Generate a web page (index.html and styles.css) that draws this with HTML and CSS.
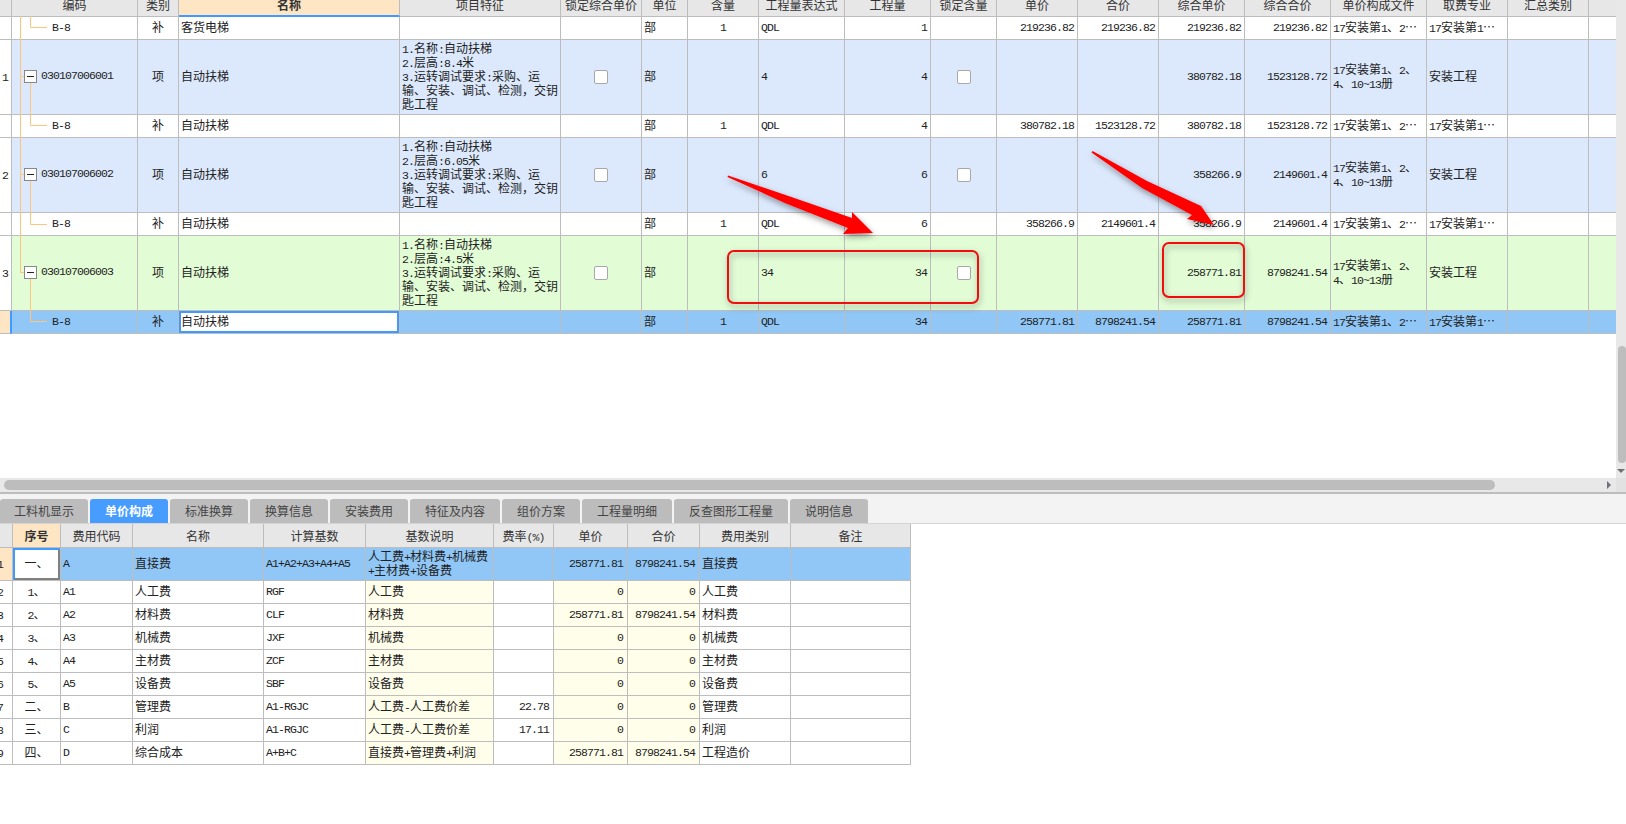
FILE: index.html
```html
<!DOCTYPE html>
<html lang="zh-CN">
<head>
  <meta charset="UTF-8">
  <title>单价构成</title>
  <link rel="stylesheet" href="styles.css">
</head>
<body>
  <div class="top">
    <div class="grid-wrap">
      <table class="grid grid-main">
        <colgroup>
          <col class="w12"><col class="w126"><col class="w41"><col class="w221"><col class="w161"><col class="w81"><col class="w46"><col class="w71"><col class="w86"><col class="w86"><col class="w66"><col class="w81"><col class="w81"><col class="w86"><col class="w86"><col class="w96"><col class="w81"><col class="w81"><col class="w27">
        </colgroup>
        <tr class="head">
          <th></th><th>编码</th><th>类别</th><th class="head-on">名称</th><th>项目特征</th><th>锁定综合单价</th><th>单位</th><th>含量</th><th>工程量表达式</th><th>工程量</th><th>锁定含量</th><th>单价</th><th>合价</th><th>综合单价</th><th>综合合价</th><th>单价构成文件</th><th>取费专业</th><th>汇总类别</th><th></th>
        </tr>
        <tr class="sub">
          <td></td><td class="sub-code m">B-8</td><td class="c">补</td><td>客货电梯</td><td></td><td></td><td>部</td><td class="c m">1</td><td class="m">QDL</td><td class="r m">1</td><td></td><td class="r m">219236.82</td><td class="r m">219236.82</td><td class="r m">219236.82</td><td class="r m">219236.82</td><td><span class="m">17</span>安装第<span class="m">1</span>、<span class="m">2</span>…</td><td><span class="m">17</span>安装第<span class="m">1</span>…</td><td></td><td></td>
        </tr>
        <tr class="tall blue">
          <td><span class="m">1</span></td><td><div class="code"><span class="minus"></span><span class="m">030107006001</span></div></td><td class="c">项</td><td>自动扶梯</td>
          <td><span class="m">1.</span>名称<span class="m">:</span>自动扶梯<br><span class="m">2.</span>层高<span class="m">:8.4</span>米<br><span class="m">3.</span>运转调试要求<span class="m">:</span>采购、运<br>输、安装、调试、检测，交钥<br>匙工程</td>
          <td class="c"><span class="check"></span></td><td>部</td><td></td><td class="m">4</td><td class="r m">4</td><td class="c"><span class="check"></span></td><td></td><td></td><td class="r m">380782.18</td><td class="r m">1523128.72</td><td><span class="m">17</span>安装第<span class="m">1</span>、<span class="m">2</span>、<br><span class="m">4</span>、<span class="m">10~13</span>册</td><td>安装工程</td><td></td><td></td>
        </tr>
        <tr class="sub">
          <td></td><td class="sub-code m">B-8</td><td class="c">补</td><td>自动扶梯</td><td></td><td></td><td>部</td><td class="c m">1</td><td class="m">QDL</td><td class="r m">4</td><td></td><td class="r m">380782.18</td><td class="r m">1523128.72</td><td class="r m">380782.18</td><td class="r m">1523128.72</td><td><span class="m">17</span>安装第<span class="m">1</span>、<span class="m">2</span>…</td><td><span class="m">17</span>安装第<span class="m">1</span>…</td><td></td><td></td>
        </tr>
        <tr class="tall blue">
          <td><span class="m">2</span></td><td><div class="code"><span class="minus"></span><span class="m">030107006002</span></div></td><td class="c">项</td><td>自动扶梯</td>
          <td><span class="m">1.</span>名称<span class="m">:</span>自动扶梯<br><span class="m">2.</span>层高<span class="m">:6.05</span>米<br><span class="m">3.</span>运转调试要求<span class="m">:</span>采购、运<br>输、安装、调试、检测，交钥<br>匙工程</td>
          <td class="c"><span class="check"></span></td><td>部</td><td></td><td class="m">6</td><td class="r m">6</td><td class="c"><span class="check"></span></td><td></td><td></td><td class="r m">358266.9</td><td class="r m">2149601.4</td><td><span class="m">17</span>安装第<span class="m">1</span>、<span class="m">2</span>、<br><span class="m">4</span>、<span class="m">10~13</span>册</td><td>安装工程</td><td></td><td></td>
        </tr>
        <tr class="sub">
          <td></td><td class="sub-code m">B-8</td><td class="c">补</td><td>自动扶梯</td><td></td><td></td><td>部</td><td class="c m">1</td><td class="m">QDL</td><td class="r m">6</td><td></td><td class="r m">358266.9</td><td class="r m">2149601.4</td><td class="r m">358266.9</td><td class="r m">2149601.4</td><td><span class="m">17</span>安装第<span class="m">1</span>、<span class="m">2</span>…</td><td><span class="m">17</span>安装第<span class="m">1</span>…</td><td></td><td></td>
        </tr>
        <tr class="tall green">
          <td><span class="m">3</span></td><td><div class="code"><span class="minus"></span><span class="m">030107006003</span></div></td><td class="c">项</td><td>自动扶梯</td>
          <td><span class="m">1.</span>名称<span class="m">:</span>自动扶梯<br><span class="m">2.</span>层高<span class="m">:4.5</span>米<br><span class="m">3.</span>运转调试要求<span class="m">:</span>采购、运<br>输、安装、调试、检测，交钥<br>匙工程</td>
          <td class="c"><span class="check"></span></td><td>部</td><td></td><td class="m">34</td><td class="r m">34</td><td class="c"><span class="check"></span></td><td></td><td></td><td class="r m">258771.81</td><td class="r m">8798241.54</td><td><span class="m">17</span>安装第<span class="m">1</span>、<span class="m">2</span>、<br><span class="m">4</span>、<span class="m">10~13</span>册</td><td>安装工程</td><td></td><td></td>
        </tr>
        <tr class="sub sel">
          <td class="row-on"></td><td class="sub-code m">B-8</td><td class="c">补</td><td class="cell-edit">自动扶梯</td><td></td><td></td><td>部</td><td class="c m">1</td><td class="m">QDL</td><td class="r m">34</td><td></td><td class="r m">258771.81</td><td class="r m">8798241.54</td><td class="r m">258771.81</td><td class="r m">8798241.54</td><td><span class="m">17</span>安装第<span class="m">1</span>、<span class="m">2</span>…</td><td><span class="m">17</span>安装第<span class="m">1</span>…</td><td></td><td></td>
        </tr>
      </table>

      <!-- tree connectors -->
      <svg class="overlay" width="1616" height="478">
        <path class="tree" d="M20.5 16V272.5M20 76.5H24M20 174.5H24M20 272.5H24M30.5 16V27.5H47M30.5 83V125.5H47M30.5 181V224.5H47M30.5 279V321.5H47"/>
      </svg>

      <!-- red marks drawn on the screenshot -->
      <svg class="overlay" width="1616" height="478">
        <defs>
          <filter id="soft" x="-20%" y="-20%" width="140%" height="150%">
            <feDropShadow dx="1" dy="3" stdDeviation="3" flood-color="#000" flood-opacity="0.4"/>
          </filter>
        </defs>
        <g filter="url(#soft)">
          <polygon class="arrow" points="728,175.5 787,195.5 852,218 852,212 873,233 843,234 848,228 786,203.5 727.5,177"/>
          <polygon class="arrow" points="1092.5,151 1147,181 1201,206 1197,200 1214,225 1187,219 1192,215 1142,188 1091.5,152.5"/>
          <rect class="mark" x="728" y="251" width="250" height="52" rx="6"/>
          <rect class="mark" x="1163" y="243" width="81" height="54" rx="6"/>
        </g>
      </svg>
    </div>
    <div class="vscroll">
      <div class="vthumb"></div>
      <div class="arrow-down"></div>
    </div>
  </div>

  <div class="hscroll">
    <div class="hthumb"></div>
    <div class="arrow-right"></div>
    <div class="corner"></div>
  </div>

  <div class="tabs">
    <div class="tab w88">工料机显示</div>
    <div class="tab tab-on w78">单价构成</div>
    <div class="tab w78">标准换算</div>
    <div class="tab w78">换算信息</div>
    <div class="tab w78">安装费用</div>
    <div class="tab w90">特征及内容</div>
    <div class="tab w78">组价方案</div>
    <div class="tab w90">工程量明细</div>
    <div class="tab w114">反查图形工程量</div>
    <div class="tab w78">说明信息</div>
  </div>

  <table class="grid grid-cost">
    <colgroup>
      <col class="w13"><col class="w48"><col class="w72"><col class="w131"><col class="w102"><col class="w128"><col class="w60"><col class="w74"><col class="w72"><col class="w91"><col class="w120">
    </colgroup>
    <tr class="head">
      <th></th><th class="head-seq">序号</th><th>费用代码</th><th>名称</th><th>计算基数</th><th>基数说明</th><th>费率<span class="m">(%)</span></th><th>单价</th><th>合价</th><th>费用类别</th><th>备注</th>
    </tr>
    <tr class="first sel">
      <td class="row-on"><span class="cut m">1</span></td><td class="c cell-cur">一、</td><td class="m">A</td><td>直接费</td><td class="m">A1+A2+A3+A4+A5</td><td>人工费<span class="m">+</span>材料费<span class="m">+</span>机械费<br><span class="m">+</span>主材费<span class="m">+</span>设备费</td><td></td><td class="r m">258771.81</td><td class="r m">8798241.54</td><td>直接费</td><td></td>
    </tr>
    <tr class="sub">
      <td><span class="cut m">2</span></td><td class="c"><span class="m">1</span>、</td><td class="m">A1</td><td>人工费</td><td class="m">RGF</td><td class="ye">人工费</td><td></td><td class="r m ye">0</td><td class="r m ye">0</td><td>人工费</td><td></td>
    </tr>
    <tr class="sub">
      <td><span class="cut m">3</span></td><td class="c"><span class="m">2</span>、</td><td class="m">A2</td><td>材料费</td><td class="m">CLF</td><td class="ye">材料费</td><td></td><td class="r m ye">258771.81</td><td class="r m ye">8798241.54</td><td>材料费</td><td></td>
    </tr>
    <tr class="sub">
      <td><span class="cut m">4</span></td><td class="c"><span class="m">3</span>、</td><td class="m">A3</td><td>机械费</td><td class="m">JXF</td><td class="ye">机械费</td><td></td><td class="r m ye">0</td><td class="r m ye">0</td><td>机械费</td><td></td>
    </tr>
    <tr class="sub">
      <td><span class="cut m">5</span></td><td class="c"><span class="m">4</span>、</td><td class="m">A4</td><td>主材费</td><td class="m">ZCF</td><td class="ye">主材费</td><td></td><td class="r m ye">0</td><td class="r m ye">0</td><td>主材费</td><td></td>
    </tr>
    <tr class="sub">
      <td><span class="cut m">6</span></td><td class="c"><span class="m">5</span>、</td><td class="m">A5</td><td>设备费</td><td class="m">SBF</td><td class="ye">设备费</td><td></td><td class="r m ye">0</td><td class="r m ye">0</td><td>设备费</td><td></td>
    </tr>
    <tr class="sub">
      <td><span class="cut m">7</span></td><td class="c">二、</td><td class="m">B</td><td>管理费</td><td class="m">A1-RGJC</td><td class="ye">人工费<span class="m">-</span>人工费价差</td><td class="r m">22.78</td><td class="r m ye">0</td><td class="r m ye">0</td><td>管理费</td><td></td>
    </tr>
    <tr class="sub">
      <td><span class="cut m">8</span></td><td class="c">三、</td><td class="m">C</td><td>利润</td><td class="m">A1-RGJC</td><td class="ye">人工费<span class="m">-</span>人工费价差</td><td class="r m">17.11</td><td class="r m ye">0</td><td class="r m ye">0</td><td>利润</td><td></td>
    </tr>
    <tr class="sub">
      <td><span class="cut m">9</span></td><td class="c">四、</td><td class="m">D</td><td>综合成本</td><td class="m">A+B+C</td><td class="ye">直接费<span class="m">+</span>管理费<span class="m">+</span>利润</td><td></td><td class="r m ye">258771.81</td><td class="r m ye">8798241.54</td><td>工程造价</td><td></td>
    </tr>
  </table>
</body>
</html>
```

FILE: styles.css
```css
* {
  box-sizing: border-box;
}
html, body {
  margin: 0;
  height: 824px;
  overflow: hidden;
  background: #fff;
}
body {
  font-family: "Noto Sans CJK SC", "Liberation Sans", sans-serif;
  font-size: 12px;
  line-height: 14px;
  color: #222;
}

/* top area */
.top {
  display: flex;
  height: 478px;
}
.grid-wrap {
  position: relative;
  width: 1616px;
  overflow: hidden;
}
.overlay {
  position: absolute;
  left: 0;
  top: 0;
  pointer-events: none;
}
.tree {
  fill: none;
  stroke: #fdc67c;
  stroke-width: 1;
}
.arrow {
  fill: #fe0000;
}
.mark {
  fill: none;
  stroke: #f20d0d;
  stroke-width: 2;
}

/* tables */
.grid {
  table-layout: fixed;
  border-collapse: separate;
  border-spacing: 0;
}
.grid-main {
  width: 1616px;
}
.grid-cost {
  width: 911px;
}
.grid th, .grid td {
  padding: 0 2px;
  border-right: 1px solid #bdbdbd;
  border-bottom: 1px solid #bdbdbd;
  white-space: nowrap;
  overflow: hidden;
  font-weight: normal;
}
.grid td {
  background: #fff;
  padding-bottom: 2px;
}
.grid td.m {
  padding-bottom: 0;
}
.grid th {
  background: #e7e7e7;
  color: #333;
  text-align: center;
}
.grid tr > :last-child {
  border-right: none;
}
.grid-cost tr > :last-child {
  border-right: 1px solid #bdbdbd;
}
.grid-main th {
  height: 17px;
  line-height: 9px;
  vertical-align: top;
}
.grid-cost th {
  height: 24px;
}
.sub td {
  height: 23px;
}
.tall td {
  height: 75px;
}
.first td {
  height: 33px;
}
.blue td {
  background: #dce9fd;
}
.green td {
  background: #e2fdd6;
}
.sel td {
  background: #90c7f7;
}
.tall td:first-child, .sub td:first-child {
  background: #fff;
}
.grid tr td.row-on {
  background: #fee6c5;
}
.grid-main td.row-on {
  border-right: 2px solid #3f9bff;
}
.grid-main th.head-on {
  background: #fee6c5;
  border-bottom: 2px solid #3f9bff;
  font-weight: bold;
}
.grid-cost th.head-seq {
  background: #fee6c5;
  font-weight: bold;
}
.grid tr td.cell-edit {
  background: #fff;
  box-shadow: inset 0 0 0 2px #3f9bff;
}
.grid tr td.cell-cur {
  background: #fff;
  box-shadow: inset 2px 2px 0 #3f9bff, inset -2px -2px 0 #808080;
}
.grid td.ye {
  background: #fffeea;
}
.c {
  text-align: center;
}
.grid .r {
  text-align: right;
  padding-right: 3px;
}
.grid-cost .r {
  padding-right: 4px;
}
.m {
  font-family: "Liberation Mono", monospace;
  font-size: 11.5px;
  line-height: 10px;
  letter-spacing: -0.9px;
}
.cut {
  margin-left: -5px;
}
.grid .sub-code {
  padding-left: 40px;
}
.code {
  display: flex;
  align-items: center;
  gap: 4px;
  padding-left: 10px;
}
.minus {
  position: relative;
  width: 13px;
  height: 13px;
  flex: none;
  border: 1px solid #888;
  background: #fff;
}
.minus::after {
  content: "";
  position: absolute;
  left: 2px;
  right: 2px;
  top: 5px;
  height: 1px;
  background: #222;
}
.check {
  display: inline-block;
  width: 14px;
  height: 14px;
  vertical-align: middle;
  background: #fff;
  border: 1px solid #a8a8a8;
  border-radius: 2px;
}

/* scrollbars */
.vscroll {
  width: 10px;
  display: flex;
  flex-direction: column;
  align-items: center;
  background: #e8e8e8;
}
.vthumb {
  width: 8px;
  height: 117px;
  margin: 346px 0 0 2px;
  background: #bdbdbd;
  border-radius: 4px;
}
.arrow-down {
  margin-top: 6px;
  border-left: 4px solid transparent;
  border-right: 4px solid transparent;
  border-top: 4px solid #707078;
}
.hscroll {
  display: flex;
  align-items: center;
  height: 16px;
  background: #e8e8e8;
  border-bottom: 2px solid #bdbdbd;
}
.hthumb {
  width: 1491px;
  height: 10px;
  margin-left: 4px;
  background: #bdbdbd;
  border-radius: 5px;
}
.arrow-right {
  margin-left: 112px;
  border-top: 4px solid transparent;
  border-bottom: 4px solid transparent;
  border-left: 4px solid #707078;
}
.corner {
  width: 10px;
  height: 14px;
  margin-left: auto;
  background: #e2e2e2;
}

/* tabs */
.tabs {
  display: flex;
  align-items: flex-end;
  gap: 2px;
  height: 30px;
  background: #f3f3f3;
  border-bottom: 1px solid #d4d4d4;
}
.tab {
  height: 24px;
  line-height: 24px;
  text-align: center;
  color: #444;
  background: #bcbcbc;
  border-radius: 3px 3px 0 0;
}
.tab-on {
  background: #469cff;
  color: #fff;
  font-weight: bold;
}
.w88 { width: 88px; }
.w78 { width: 78px; }
.w90 { width: 90px; }
.w114 { width: 114px; }
.w12 { width: 12px; }
.w13 { width: 13px; }
.w126 { width: 126px; }
.w41 { width: 41px; }
.w221 { width: 221px; }
.w161 { width: 161px; }
.w81 { width: 81px; }
.w46 { width: 46px; }
.w71 { width: 71px; }
.w86 { width: 86px; }
.w66 { width: 66px; }
.w96 { width: 96px; }
.w27 { width: 27px; }
.w48 { width: 48px; }
.w72 { width: 72px; }
.w131 { width: 131px; }
.w102 { width: 102px; }
.w128 { width: 128px; }
.w60 { width: 60px; }
.w74 { width: 74px; }
.w91 { width: 91px; }
.w120 { width: 120px; }
```
